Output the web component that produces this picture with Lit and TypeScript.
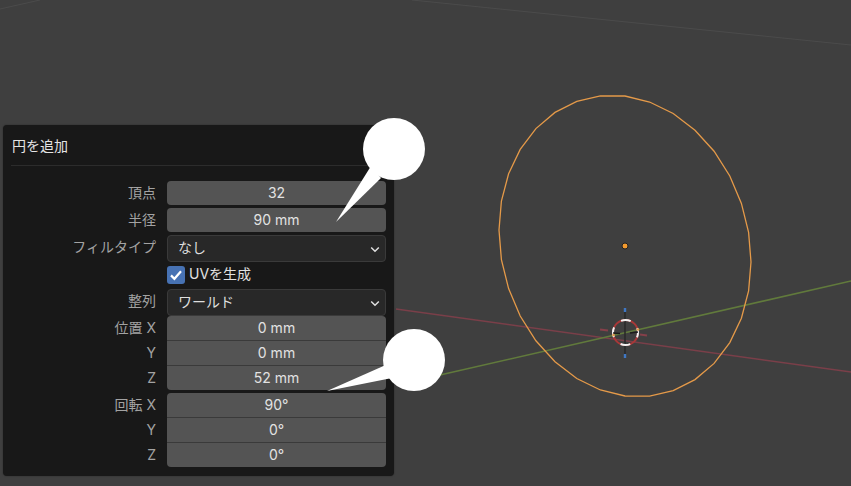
// app.ts
// Blender "add circle" operator panel over the 3D viewport

import { LitElement, html, css, svg } from "lit";
import { customElement } from "lit/decorators.js";

type Row = { label: string; value: string };

const VERTICES = 32;

function circlePoints(): string {
  const pts: string[] = [];
  for (let i = 0; i < VERTICES; i++) {
    const t = (i * 2 * Math.PI) / VERTICES;
    const x = 625 + 126 * Math.cos(t);
    const y = 246 + 150 * Math.sin(t) + 16 * Math.cos(t);
    pts.push(`${x.toFixed(1)},${y.toFixed(1)}`);
  }
  return pts.join(" ");
}

const position: Row[] = [
  { label: "位置 X", value: "0 mm" },
  { label: "Y", value: "0 mm" },
  { label: "Z", value: "52 mm" },
];

const rotation: Row[] = [
  { label: "回転 X", value: "90°" },
  { label: "Y", value: "0°" },
  { label: "Z", value: "0°" },
];

@customElement("app-root")
export class AppRoot extends LitElement {
  static styles = css`
    :host {
      display: block;
      position: relative;
      width: 851px;
      height: 486px;
      overflow: hidden;
      background: #3f3f3f;
      font-family: Inter, "Noto Sans CJK JP", sans-serif;
      font-size: 14px;
    }

    .viewport,
    .callouts {
      position: absolute;
      inset: 0;
      width: 851px;
      height: 486px;
    }

    .stage {
      position: relative;
      padding: 125px 0 0 3px;
    }

    .panel {
      box-sizing: border-box;
      width: 391px;
      height: 351px;
      padding: 0 8px 0 8px;
      background: #181818;
      border-radius: 4px;
      box-shadow: 0 0 2px rgba(0, 0, 0, 0.35);
    }

    .title {
      box-sizing: border-box;
      height: 41px;
      padding: 0 0 1px 1px;
      margin-bottom: 15px;
      display: flex;
      align-items: center;
      color: #e4e4e4;
      border-bottom: 1px solid #2c2c2c;
    }

    .rows {
      display: flex;
      flex-direction: column;
      gap: 3px;
    }

    .row {
      display: grid;
      grid-template-columns: 145px 219px;
      column-gap: 11px;
      height: 24px;
      line-height: 23px;
    }

    .label {
      text-align: right;
      color: #a3a3a3;
    }

    .field {
      text-align: center;
      color: #e2e2e2;
      background: #545454;
      border-radius: 4px;
    }

    .select {
      box-sizing: border-box;
      display: flex;
      align-items: center;
      justify-content: space-between;
      padding: 0 5px 2px 10px;
      color: #dedede;
      background: #282828;
      border: 1px solid #3a3a3a;
      border-radius: 4px;
    }

    .select svg {
      width: 10px;
      height: 7px;
      margin-top: 3px;
    }

    .check {
      display: flex;
      align-items: center;
      gap: 4px;
      color: #e2e2e2;
    }

    .check span:last-child {
      margin-bottom: 3px;
    }

    .box {
      width: 18px;
      height: 18px;
      border-radius: 3px;
      background: #4772b3;
      display: flex;
      align-items: center;
      justify-content: center;
    }

    .box svg {
      width: 14px;
      height: 12px;
    }

    .group {
      display: flex;
      flex-direction: column;
    }

    .group .row {
      height: 25px;
      line-height: 24px;
    }

    .group .row:last-child {
      height: 24px;
    }

    .group .field {
      border-radius: 0;
      border-bottom: 1px solid #3a3a3a;
    }

    .group .row:first-child .field {
      border-radius: 4px 4px 0 0;
    }

    .group .row:last-child .field {
      border-radius: 0 0 4px 4px;
      border-bottom: 0;
    }
  `;

  private chevron() {
    return html`<svg viewBox="0 0 10 7">
      <path d="M1.2 1.5 L5 5.2 L8.8 1.5" fill="none" stroke="#e0e0e0" stroke-width="1.5" />
    </svg>`;
  }

  private field(r: Row) {
    return html`<div class="row">
      <div class="label">${r.label}</div>
      <div class="field">${r.value}</div>
    </div>`;
  }

  private select(label: string, value: string) {
    return html`<div class="row">
      <div class="label">${label}</div>
      <div class="select"><span>${value}</span>${this.chevron()}</div>
    </div>`;
  }

  private renderViewport() {
    return html`<svg class="viewport" viewBox="0 0 851 486">
      ${svg`
        <line x1="412" y1="0" x2="851" y2="45" stroke="#4b4b4b" />
        <line x1="0" y1="9" x2="40" y2="0" stroke="#4b4b4b" />
        <line x1="396" y1="309" x2="851" y2="372" stroke="#7a3f49" stroke-width="1.4" />
        <line x1="440" y1="375" x2="851" y2="281" stroke="#617a3c" stroke-width="1.6" />
        <polygon points=${circlePoints()} fill="none" stroke="#e59a49" stroke-width="1.3" />
        <circle cx="625" cy="246" r="3" fill="#f29a2e" stroke="#222" />
        <line x1="600" y1="329.5" x2="608" y2="330.6" stroke="#86404a" stroke-width="2" />
        <line x1="640" y1="334.5" x2="647" y2="335.5" stroke="#86404a" stroke-width="2" />
        <line x1="625" y1="308" x2="625" y2="358" stroke="#2a2a2a" stroke-width="1.6" />
        <line x1="625" y1="308" x2="625" y2="312" stroke="#3f77c4" stroke-width="2.4" />
        <line x1="625" y1="354" x2="625" y2="358" stroke="#3f77c4" stroke-width="2.4" />
        <circle cx="625.5" cy="332.5" r="12.5" fill="none" stroke="#a83838" stroke-width="2" />
        <circle cx="625.5" cy="332.5" r="12.5" fill="none" stroke="#f2f2f2" stroke-width="2"
          stroke-dasharray="9.82 9.82" stroke-dashoffset="4.91" />
        <line x1="613" y1="333" x2="620" y2="333.5" stroke="#1c1c1c" stroke-width="1.6" />
        <line x1="630" y1="333" x2="638" y2="332" stroke="#1c1c1c" stroke-width="1.6" />
        <circle cx="638" cy="329.5" r="1.2" fill="#e59a49" />
        <circle cx="613.5" cy="335" r="1.2" fill="#e59a49" />
      `}
    </svg>`;
  }

  private renderCallouts() {
    return html`<svg class="callouts" viewBox="0 0 851 486">
      ${svg`
        <circle cx="394" cy="149" r="31" fill="#fff" />
        <polygon points="371,166 336,222 381,178" fill="#fff" />
        <circle cx="414" cy="360" r="31" fill="#fff" />
        <polygon points="388,364 327,391 392,378" fill="#fff" />
      `}
    </svg>`;
  }

  render() {
    return html`
      ${this.renderViewport()}
      <div class="stage">
        <div class="panel">
          <div class="title">円を追加</div>
          <div class="rows">
            ${this.field({ label: "頂点", value: "32" })}
            ${this.field({ label: "半径", value: "90 mm" })}
            ${this.select("フィルタイプ", "なし")}
            <div class="row">
              <div></div>
              <div class="check">
                <span class="box">
                  <svg viewBox="0 0 14 12">
                    <path d="M2 6.4 L5.4 9.8 L12 2.2" fill="none" stroke="#fff" stroke-width="2.2" />
                  </svg>
                </span>
                <span>UVを生成</span>
              </div>
            </div>
            ${this.select("整列", "ワールド")}
            <div class="group">${position.map((r) => this.field(r))}</div>
            <div class="group">${rotation.map((r) => this.field(r))}</div>
          </div>
        </div>
      </div>
      ${this.renderCallouts()}
    `;
  }
}
